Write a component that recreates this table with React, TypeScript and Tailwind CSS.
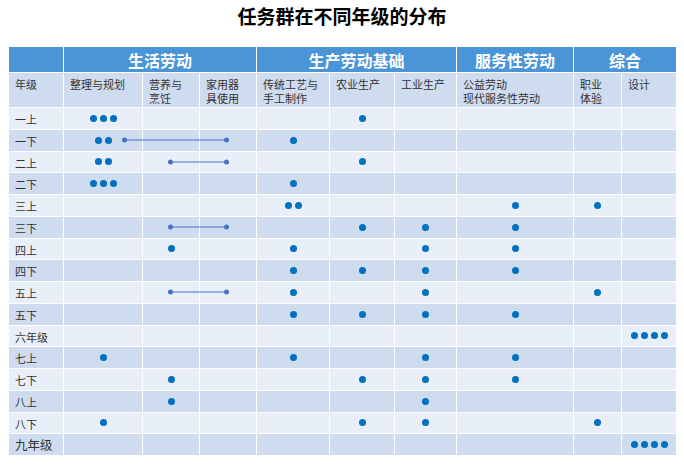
import React from 'react';

// column widths of the table, left to right
const cols = 'grid-cols-[54px_79px_57px_57px_73px_65px_62px_117px_48px_55px]';

type Row = { label: string; dots: number[]; link?: [number, number]; big?: boolean };

// dots: count per column (9 content columns)
const rows: Row[] = [
    { label: '一上', dots: [3, 0, 0, 0, 1, 0, 0, 0, 0] },
    { label: '一下', dots: [2, 0, 0, 1, 0, 0, 0, 0, 0], link: [115, 217] },
    { label: '二上', dots: [2, 0, 0, 0, 1, 0, 0, 0, 0], link: [161, 217] },
    { label: '二下', dots: [3, 0, 0, 1, 0, 0, 0, 0, 0] },
    { label: '三上', dots: [0, 0, 0, 2, 0, 0, 1, 1, 0] },
    { label: '三下', dots: [0, 0, 0, 0, 1, 1, 1, 0, 0], link: [161, 217] },
    { label: '四上', dots: [0, 1, 0, 1, 0, 1, 1, 0, 0] },
    { label: '四下', dots: [0, 0, 0, 1, 1, 1, 1, 0, 0] },
    { label: '五上', dots: [0, 0, 0, 1, 0, 1, 0, 1, 0], link: [161, 217] },
    { label: '五下', dots: [0, 0, 0, 1, 1, 1, 1, 0, 0] },
    { label: '六年级', dots: [0, 0, 0, 0, 0, 0, 0, 0, 4] },
    { label: '七上', dots: [1, 0, 0, 1, 0, 1, 1, 0, 0] },
    { label: '七下', dots: [0, 1, 0, 0, 1, 1, 1, 0, 0] },
    { label: '八上', dots: [0, 1, 0, 0, 0, 1, 0, 0, 0] },
    { label: '八下', dots: [1, 0, 0, 0, 1, 1, 0, 1, 0] },
    { label: '九年级', dots: [0, 0, 0, 0, 0, 0, 0, 0, 4], big: true },
];

const subHeads = [
    ['年级'],
    ['整理与规划'],
    ['营养与', '烹饪'],
    ['家用器', '具使用'],
    ['传统工艺与', '手工制作'],
    ['农业生产'],
    ['工业生产'],
    ['公益劳动', '现代服务性劳动'],
    ['职业', '体验'],
    ['设计'],
];

function Dots({ n }: { n: number }) {
    return (
        <div className="flex gap-[3px]">
            {Array.from({ length: n }).map((_, i) => (
                <span key={i} className="w-[7px] h-[7px] rounded-full bg-[#0070c0]" />
            ))}
        </div>
    );
}

export default function App() {
    return (
        <div className="w-[684px] h-[466px] bg-white font-['Noto_Sans_CJK_SC',sans-serif] text-[#222]">
            <h1 className="pt-[4px] h-[47px] text-center text-[19px] font-bold leading-[24px] text-black">
                任务群在不同年级的分布
            </h1>

            <div className="ml-[9px] w-[667px]">
                {/* group header */}
                <div className="flex h-[25px] bg-[#4a94d8] text-white text-[16px] font-bold">
                    <div className="w-[54px]" />
                    <div className="w-[193px] border-l border-white flex items-center justify-center">生活劳动</div>
                    <div className="w-[200px] border-l border-white flex items-center justify-center">生产劳动基础</div>
                    <div className="w-[117px] border-l border-white flex items-center justify-center">服务性劳动</div>
                    <div className="w-[103px] border-l border-white flex items-center justify-center">综合</div>
                </div>

                {/* sub header */}
                <div className={`grid ${cols} h-[35px] border-t border-white bg-[#cfdcef] text-[11px] leading-[14px] text-[#333]`}>
                    {subHeads.map((lines, i) => (
                        <div key={i} className={`pt-[4px] pl-[6px] ${i > 0 ? 'border-l border-white' : ''}`}>
                            {lines.map((l) => (
                                <div key={l} className="h-[14px]">{l}</div>
                            ))}
                        </div>
                    ))}
                </div>

                {/* data rows */}
                {rows.map((row, r) => (
                    <div
                        key={row.label}
                        className={`relative grid ${cols} h-[21.75px] border-t border-white ${r % 2 === 0 ? 'bg-[#e8eff8]' : 'bg-[#cfdcef]'}`}
                    >
                        <div className={`flex items-center pl-[6px] pt-[2px] text-[#333] ${row.big ? 'text-[12.5px]' : 'text-[11px]'}`}>
                            {row.label}
                        </div>
                        {row.dots.map((n, i) => (
                            <div key={i} className="border-l border-white flex items-center justify-center">
                                {n > 0 && <Dots n={n} />}
                            </div>
                        ))}
                        {row.link && (
                            <div
                                className="absolute top-1/2 -translate-y-1/2 flex items-center"
                                style={{ left: row.link[0] - 2.5, width: row.link[1] - row.link[0] + 5 }}
                            >
                                <span className="w-[5px] h-[5px] rounded-full bg-[#4472c4]" />
                                <span className="flex-1 h-px bg-[#4472c4]" />
                                <span className="w-[5px] h-[5px] rounded-full bg-[#4472c4]" />
                            </div>
                        )}
                    </div>
                ))}
            </div>
        </div>
    );
}
